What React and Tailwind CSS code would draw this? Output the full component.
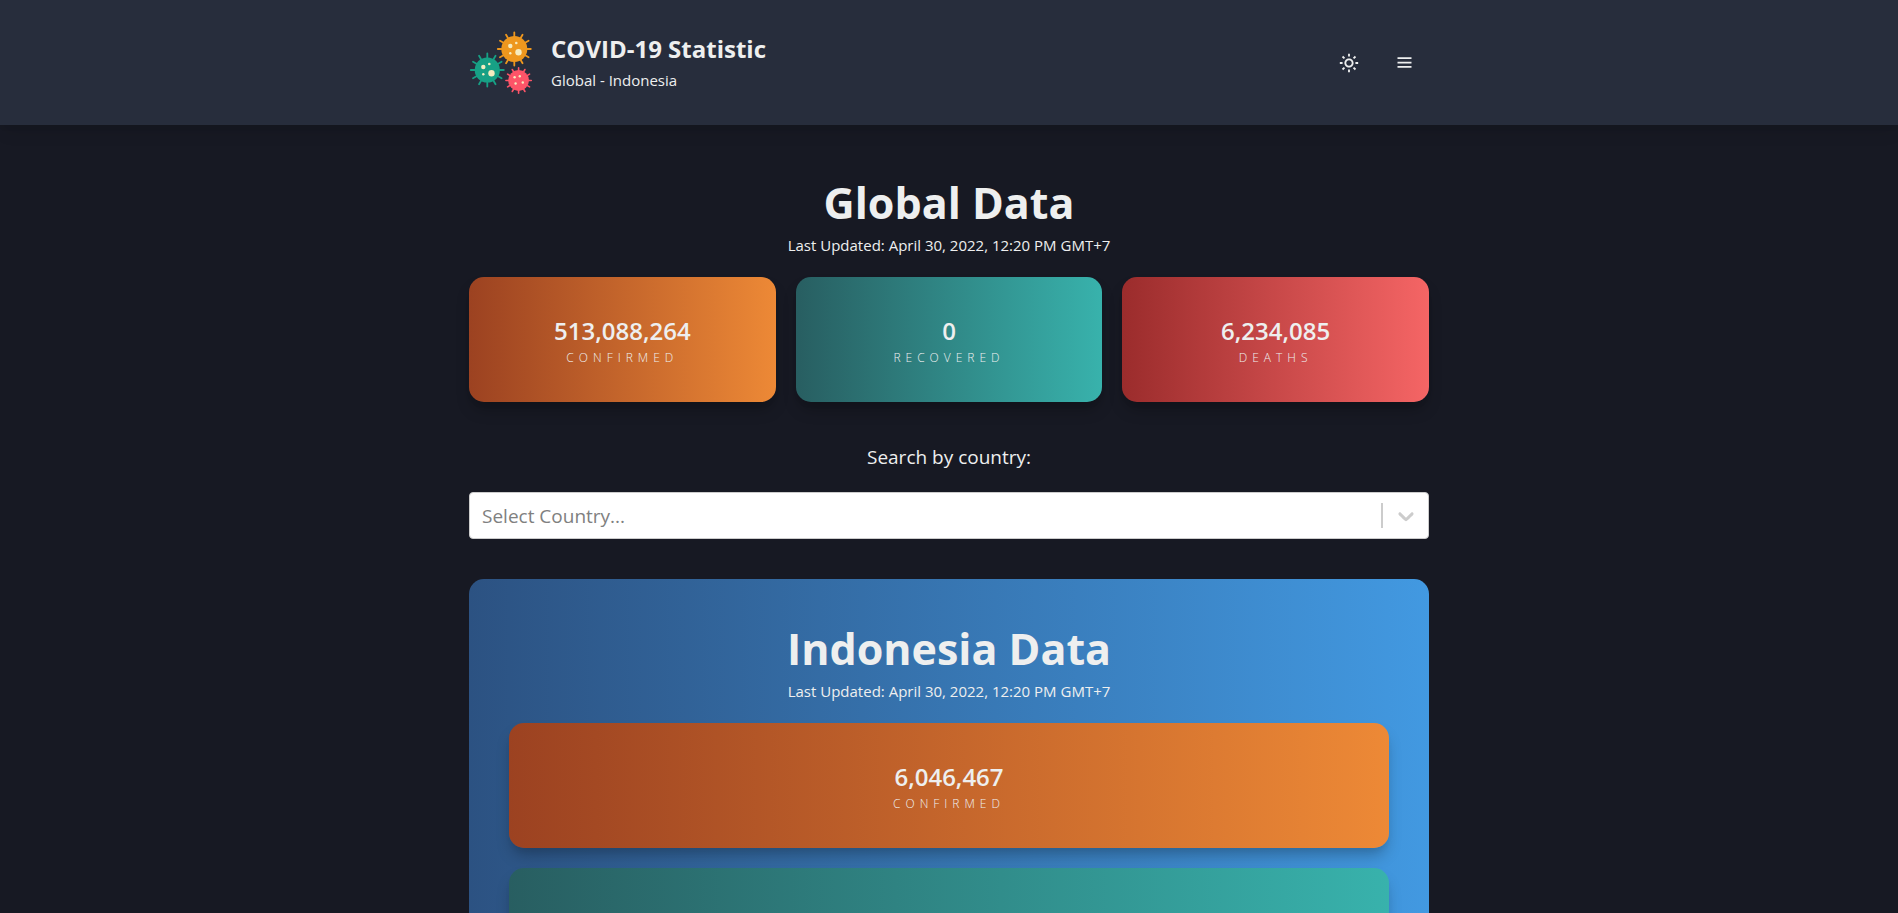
import { BiMenu, BiSun } from "react-icons/bi";

const UPDATED = "Last Updated: April 30, 2022, 12:20 PM GMT+7";

const tones = {
  confirmed: "from-[#9c4221] to-[#ed8936]",
  recovered: "from-[#285e61] to-[#38b2ac]",
  deaths: "from-[#9b2c2c] to-[#f56565]",
};

const globalStats = [
  { tone: "confirmed", value: "513,088,264", label: "Confirmed" },
  { tone: "recovered", value: "0", label: "Recovered" },
  { tone: "deaths", value: "6,234,085", label: "Deaths" },
];

const indonesiaStats = [
  { tone: "confirmed", value: "6,046,467", label: "Confirmed" },
  { tone: "recovered", value: "", label: "" },
];

function Virus({ cx, cy, body, reach, color, width, dots }) {
  const rays = Array.from({ length: 12 }, (_, i) => (i * Math.PI) / 6);
  return (
    <g>
      {rays.map((a) => (
        <line
          key={a}
          x1={cx}
          y1={cy}
          x2={cx + Math.cos(a) * reach}
          y2={cy + Math.sin(a) * reach}
          stroke={color}
          strokeWidth={width}
          strokeLinecap="round"
        />
      ))}
      <circle cx={cx} cy={cy} r={body} fill={color} />
      {dots.map(([dx, dy, r]) => (
        <circle key={`${dx},${dy}`} cx={cx + dx} cy={cy + dy} r={r} fill="#f6ecc0" />
      ))}
    </g>
  );
}

const bigDots = [
  [-4, -3, 2.2],
  [2, -6, 1.3],
  [4.2, 3.3, 3.2],
  [-4, 4.3, 1.2],
];

const smallDots = [
  [-4, -3.2, 1.2],
  [1.2, -4.2, 1.2],
  [-3, 3, 1.2],
  [4.2, 2, 1.2],
];

function Logo() {
  return (
    <svg viewBox="0 0 64 64" className="size-16 shrink-0" aria-hidden="true">
      <Virus cx={45.3} cy={18} body={13} reach={16.5} width={1.8} color="#ee971e" dots={bigDots} />
      <Virus cx={18.3} cy={39} body={12.6} reach={16.5} width={1.8} color="#17a085" dots={bigDots} />
      <Virus cx={49.6} cy={49.5} body={10.4} reach={12.7} width={1.6} color="#fd5468" dots={smallDots} />
    </svg>
  );
}

function StatCard({ tone, value, label }) {
  return (
    <div
      className={`h-[125px] rounded-[15px] bg-linear-to-r/srgb py-10 text-center shadow-[0_10px_15px_-3px_rgba(0,0,0,0.25),0_4px_6px_-2px_rgba(0,0,0,0.05)] ${tones[tone]}`}
    >
      <p className="text-2xl leading-7 font-semibold">{value}</p>
      <p className="text-xs leading-[26px] font-light tracking-[5px] uppercase">{label}</p>
    </div>
  );
}

function SectionHeading({ children }) {
  return (
    <div className="text-center">
      <h2 className="text-[43px] leading-[60px] font-bold">{children}</h2>
      <p className="text-[15px] leading-6">{UPDATED}</p>
    </div>
  );
}

export default function App() {
  return (
    <div className="min-h-screen bg-[#171923] font-['Open_Sans','Noto_Sans',sans-serif] text-[#eeefef]">
      <header className="bg-[#272d3c] shadow-[0_10px_15px_-3px_rgba(0,0,0,0.1),0_4px_6px_-2px_rgba(0,0,0,0.05)]">
        <div className="mx-auto flex h-[125px] max-w-[960px] items-center justify-between">
          <div className="flex items-center gap-[18px]">
            <Logo />
            <div>
              <h1 className="text-2xl leading-[34px] font-bold">COVID-19 Statistic</h1>
              <p className="text-[15px] leading-7">Global - Indonesia</p>
            </div>
          </div>
          <div className="flex gap-[5px]">
            <button type="button" aria-label="Toggle theme" className="grid size-[50px] place-items-center rounded-lg">
              <BiSun size={22} />
            </button>
            <button type="button" aria-label="Open menu" className="grid size-[50px] place-items-center rounded-lg">
              <BiMenu size={21} />
            </button>
          </div>
        </div>
      </header>

      <main className="mx-auto max-w-[960px] pt-12">
        <SectionHeading>Global Data</SectionHeading>
        <div className="mt-5 grid grid-cols-3 gap-5">
          {globalStats.map((s) => (
            <StatCard key={s.label} {...s} />
          ))}
        </div>

        <label htmlFor="country" className="mt-10 block text-center text-[19px] leading-[30px]">
          Search by country:
        </label>
        <div className="relative mt-5 text-[#cccccc]">
          <select
            id="country"
            defaultValue=""
            className="block h-[47px] w-full appearance-none rounded border border-[#cccccc] bg-white pt-0.5 pr-14 pl-3 text-[19px] text-[#808080]"
          >
            <option value="">Select Country...</option>
            <option value="ID">Indonesia</option>
          </select>
          <div className="pointer-events-none absolute inset-y-0 right-[10px] flex items-center gap-[10px]">
            <span className="h-[25px] w-0.5 bg-[#cccccc]" />
            <svg viewBox="0 0 20 20" className="size-[26px] fill-current" aria-hidden="true">
              <path d="M4.516 7.548c0.436-0.446 1.043-0.481 1.576 0l3.908 3.747 3.908-3.747c0.533-0.481 1.141-0.446 1.574 0 0.436 0.445 0.408 1.197 0 1.615-0.406 0.418-4.695 4.502-4.695 4.502-0.217 0.223-0.502 0.335-0.787 0.335s-0.57-0.112-0.789-0.335c0 0-4.287-4.084-4.695-4.502s-0.436-1.17 0-1.615z" />
            </svg>
          </div>
        </div>

        <section className="mt-10 rounded-[15px] bg-linear-to-r/srgb from-[#2c5282] to-[#4299e1] p-10">
          <SectionHeading>Indonesia Data</SectionHeading>
          <div className="mt-5 grid gap-5">
            {indonesiaStats.map((s) => (
              <StatCard key={s.tone} {...s} />
            ))}
          </div>
        </section>
      </main>
    </div>
  );
}
